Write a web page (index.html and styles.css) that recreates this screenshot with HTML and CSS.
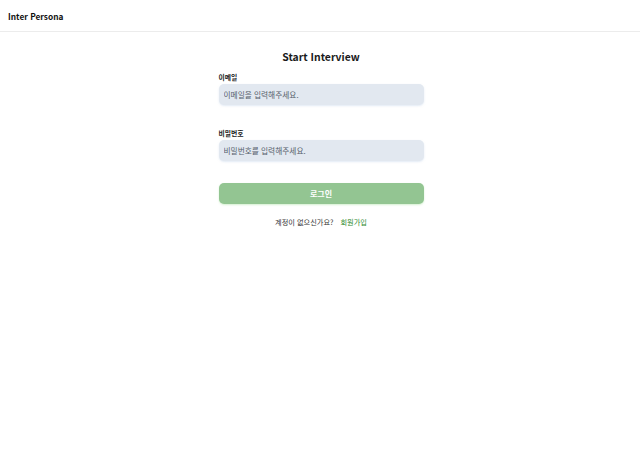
FILE: index.html
```html
<!DOCTYPE html>
<html lang="ko">
<head>
<meta charset="utf-8">
<link rel="stylesheet" href="styles.css">
</head>
<body>
<header class="topbar">
  <span class="brand">Inter Persona</span>
</header>
<main class="page">
  <form class="login">
    <h1 class="title">Start Interview</h1>
    <label class="field">
      <span class="label">이메일</span>
      <input class="input" type="email" placeholder="이메일을 입력해주세요.">
    </label>
    <label class="field">
      <span class="label">비밀번호</span>
      <input class="input" type="password" placeholder="비밀번호를 입력해주세요.">
    </label>
    <button class="submit" type="button">로그인</button>
    <p class="signup">계정이 없으신가요? <a class="signup-link" href="#">회원가입</a></p>
  </form>
</main>
</body>
</html>
```
FILE: styles.css
```css
* { box-sizing: border-box; }
html, body { margin: 0; padding: 0; background: #fff; }
body {
  font-family: "Noto Sans CJK KR", "Noto Sans", sans-serif;
  color: #1f2328;
  width: 640px;
  height: 464px;
}
.topbar {
  height: 32px;
  border-bottom: 1px solid #ececec;
  display: flex;
  align-items: center;
  padding: 0 8px;
}
.brand {
  font-size: 8.3px;
  font-weight: 700;
  color: #111;
}
.page {
  display: flex;
  justify-content: center;
}
.login {
  width: 205px;
  margin-left: 2px;
  display: flex;
  flex-direction: column;
  padding-top: 15px;
}
.title {
  margin: 0 0 4px;
  text-align: center;
  font-size: 10.4px;
  font-weight: 700;
  line-height: 20px;
  color: #1a1a1a;
}
.field {
  display: flex;
  flex-direction: column;
  margin-bottom: 22px;
}
.label {
  font-size: 6.8px;
  font-weight: 700;
  line-height: 12px;
  color: #222;
  margin-bottom: 1px;
}
.input {
  height: 21px;
  border: none;
  border-radius: 5px;
  background: #e2e8f0;
  box-shadow: 0 1px 2px rgba(200, 215, 235, 0.5);
  font-family: inherit;
  font-size: 7.7px;
  padding: 0 5px;
  outline: none;
}
.input::placeholder { color: #565f6b; }
.submit {
  margin-top: 0;
  height: 21px;
  border: none;
  border-radius: 5px;
  background: #93c592;
  color: #fff;
  font-family: inherit;
  font-weight: 700;
  font-size: 8px;
  box-shadow: 0 1px 2px rgba(150, 220, 140, 0.4);
}
.signup {
  margin: 13px 0 0;
  text-align: center;
  font-size: 7.2px;
  color: #333;
}
.signup-link {
  color: #2e8b2e;
  text-decoration: none;
  margin-left: 5px;
}
```
